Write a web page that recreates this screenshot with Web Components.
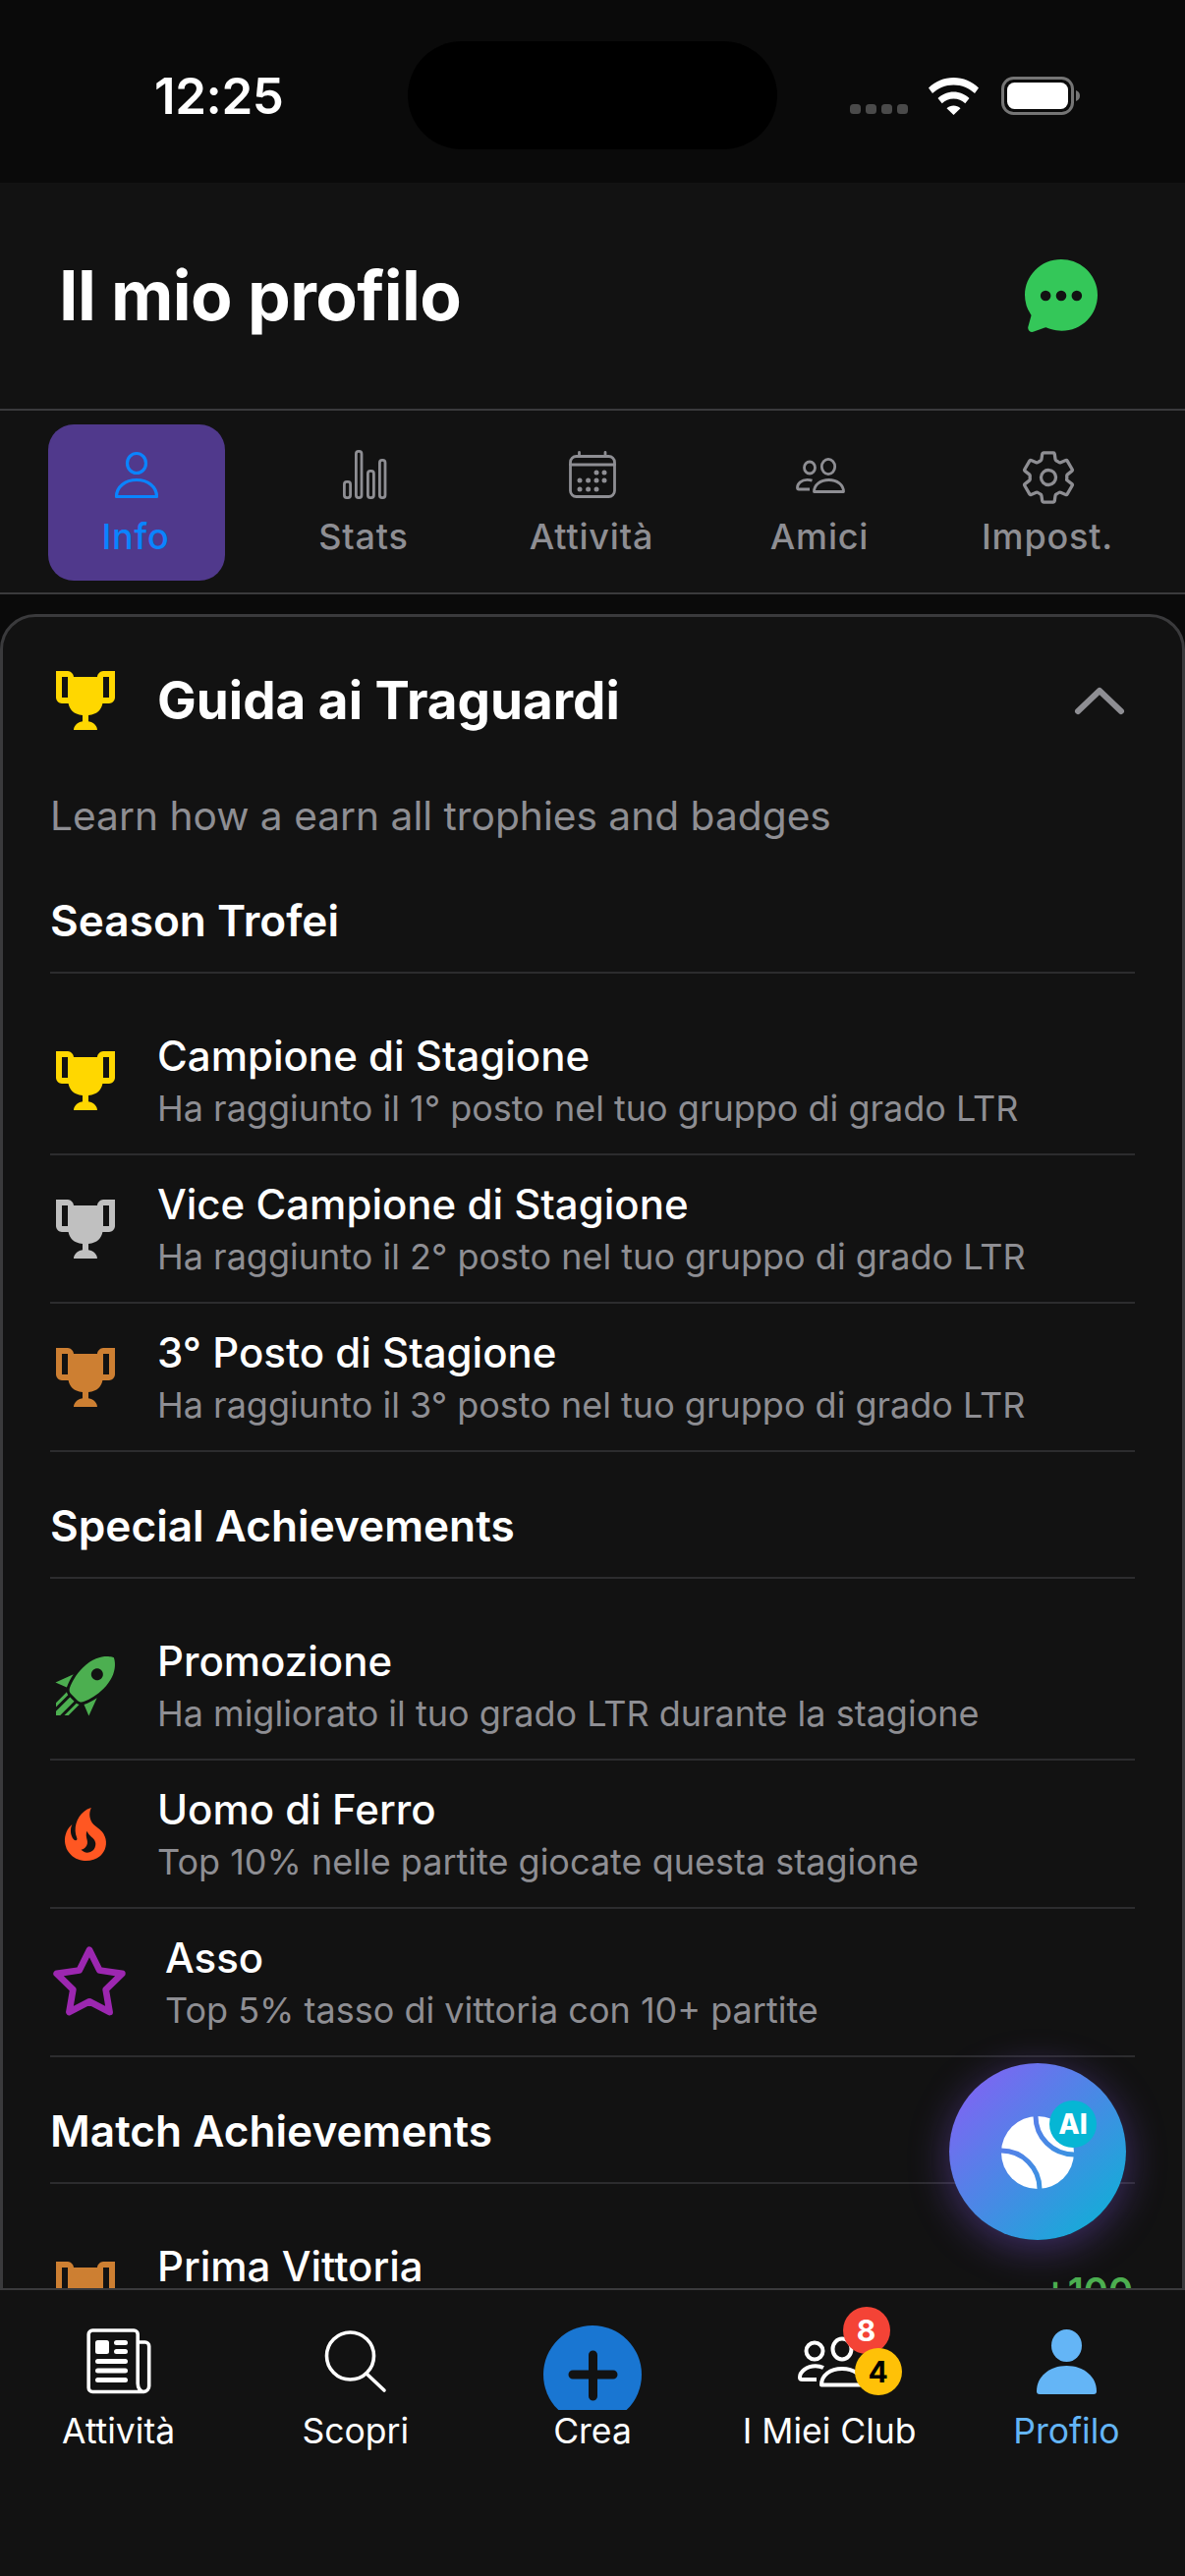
<!DOCTYPE html>
<html lang="it">
<head>
<meta charset="utf-8">
<title>Il mio profilo</title>
<style>
  html, body { margin: 0; padding: 0; background: #0a0a0a; }
  body { font-family: Inter, "Liberation Sans", sans-serif; }
</style>
</head>
<body>
<profile-app>
  <status-bar slot="status"></status-bar>
  <page-header slot="header">Il mio profilo</page-header>
  <tab-strip slot="tabs">
    <tab-item icon="user" active>Info</tab-item>
    <tab-item icon="bars">Stats</tab-item>
    <tab-item icon="calendar">Attività</tab-item>
    <tab-item icon="people">Amici</tab-item>
    <tab-item icon="gear">Impost.</tab-item>
  </tab-strip>
  <guide-card heading="Guida ai Traguardi" note="Learn how a earn all trophies and badges">
    <guide-section heading="Season Trofei">
      <guide-row icon="trophy" color="#ffd700" title="Campione di Stagione" text="Ha raggiunto il 1° posto nel tuo gruppo di grado LTR"></guide-row>
      <guide-row icon="trophy" color="#c0c0c0" title="Vice Campione di Stagione" text="Ha raggiunto il 2° posto nel tuo gruppo di grado LTR"></guide-row>
      <guide-row icon="trophy" color="#cd7f32" title="3° Posto di Stagione" text="Ha raggiunto il 3° posto nel tuo gruppo di grado LTR"></guide-row>
    </guide-section>
    <guide-section heading="Special Achievements">
      <guide-row icon="rocket" color="#4caf50" title="Promozione" text="Ha migliorato il tuo grado LTR durante la stagione"></guide-row>
      <guide-row icon="fire" color="#ff5722" title="Uomo di Ferro" text="Top 10% nelle partite giocate questa stagione"></guide-row>
      <guide-row icon="star" color="#9c27b0" title="Asso" text="Top 5% tasso di vittoria con 10+ partite" wide></guide-row>
    </guide-section>
    <guide-section heading="Match Achievements">
      <guide-row icon="trophy" color="#cd7f32" title="Prima Vittoria" text="Ha vinto la tua prima partita" points="+100"></guide-row>
    </guide-section>
  </guide-card>
  <ai-fab slot="fab"></ai-fab>
  <bottom-nav slot="nav">
    <nav-item icon="news">Attività</nav-item>
    <nav-item icon="search">Scopri</nav-item>
    <nav-item icon="create">Crea</nav-item>
    <nav-item icon="club" red="8" amber="4">I Miei Club</nav-item>
    <nav-item icon="person" active>Profilo</nav-item>
  </bottom-nav>
</profile-app>

<script>
// shared svg bodies, all drawn in currentColor
const ICONS = {
  user: `<svg viewBox="0 0 60 60" fill="none" stroke="currentColor" stroke-width="3.2" stroke-linejoin="round"><ellipse cx="30" cy="15.500" rx="9.500" ry="10"/><path d="M9.500 49.500c0-10 9-17 20.500-17s20.500 7 20.500 17z"/></svg>`,
  bars: `<svg viewBox="0 0 60 60" fill="none" stroke="currentColor" stroke-width="2.800"><rect x="9.400" y="34.400" width="6.200" height="16.200" rx="2.500"/><rect x="21.400" y="3.400" width="5.600" height="47.200" rx="2.500"/><rect x="33.400" y="23.400" width="6" height="27.200" rx="2.500"/><rect x="45.400" y="12.400" width="5.600" height="38.200" rx="2.500"/></svg>`,
  calendar: `<svg viewBox="0 0 60 60" fill="none" stroke="currentColor" stroke-width="2.800" stroke-linecap="round"><rect x="7.500" y="8.500" width="45" height="41" rx="6"/><path d="M7.500 17h45M16.500 4.500v4M43 4.500v4"/><g fill="currentColor" stroke="none"><circle cx="34" cy="25" r="2.500"/><circle cx="42" cy="25" r="2.500"/><circle cx="17" cy="33" r="2.500"/><circle cx="25.600" cy="33" r="2.500"/><circle cx="34" cy="33" r="2.500"/><circle cx="42" cy="33" r="2.500"/><circle cx="17" cy="42" r="2.500"/><circle cx="25.600" cy="42" r="2.500"/><circle cx="34" cy="42" r="2.500"/></g></svg>`,
  people: `<svg viewBox="0 0 60 60" fill="none" stroke="currentColor" stroke-width="2.800" stroke-linejoin="round"><ellipse cx="19" cy="20" rx="5.500" ry="6"/><ellipse cx="38" cy="19" rx="6.700" ry="7.700"/><path d="M23.500 44.500c0-7 6.500-12 15-12s15 5 15 12z"/><path d="M21.500 33.200c-1.500-.5-3-.8-5-.8-6 0-10 4-10 8 0 1 .5 1.600 1.500 1.600h11"/></svg>`,
  gear: `<svg viewBox="0 0 512 512" fill="none" stroke="currentColor" stroke-width="28" stroke-linecap="round" stroke-linejoin="round"><path d="M262.290 192.310a64 64 0 1057.400 57.400 64.130 64.130 0 00-57.400-57.400zM416.390 256a154.340 154.340 0 01-1.530 20.790l45.210 35.460a10.810 10.810 0 012.450 13.750l-42.770 74a10.810 10.810 0 01-13.140 4.590l-44.900-18.080a16.110 16.110 0 00-15.170 1.750A164.480 164.480 0 01325 400.800a15.940 15.940 0 00-8.820 12.140l-6.730 47.890a11.080 11.080 0 01-10.680 9.170h-85.540a11.110 11.110 0 01-10.690-8.870l-6.720-47.820a16.070 16.070 0 00-9-12.220 155.300 155.300 0 01-21.460-12.570 16 16 0 00-15.110-1.710l-44.890 18.070a10.810 10.810 0 01-13.140-4.580l-42.770-74a10.800 10.800 0 012.450-13.750l38.210-30a16.050 16.050 0 006-14.080c-.36-4.170-.58-8.330-.58-12.500s.21-8.270.58-12.350a16 16 0 00-6.070-13.940l-38.190-30A10.810 10.810 0 0149.480 186l42.770-74a10.810 10.810 0 0113.140-4.590l44.900 18.080a16.110 16.110 0 0015.170-1.750A164.480 164.480 0 01187 111.200a15.940 15.940 0 008.820-12.140l6.730-47.890A11.080 11.080 0 01213.230 42h85.540a11.110 11.110 0 0110.690 8.870l6.720 47.820a16.070 16.070 0 009 12.220 155.300 155.300 0 0121.460 12.570 16 16 0 0015.110 1.710l44.890-18.070a10.810 10.810 0 0113.140 4.580l42.770 74a10.800 10.800 0 01-2.450 13.750l-38.210 30a16.050 16.050 0 00-6.050 14.080c.33 4.140.55 8.300.55 12.470z"/></svg>`,
  trophy: `<svg viewBox="0 0 24 24" fill="currentColor"><path d="M18 2C17.100 2 16 3 16 4H8C8 3 6.900 2 6 2H2V11C2 12 3 13 4 13H6.200C6.600 15 7.900 16.700 11 17V19.080C8 19.540 8 22 8 22H16C16 22 16 19.540 13 19.080V17C16.100 16.700 17.400 15 17.800 13H20C21 13 22 12 22 11V2H18M6 11H4V4H6V11M20 11H18V4H20V11Z"/></svg>`,
  rocket: `<svg viewBox="0 0 24 24" fill="currentColor"><path d="M13.130 22.190L11.500 18.360C13.070 17.780 14.540 17 15.900 16.090L13.130 22.190M5.640 12.500L1.810 10.870L7.910 8.100C7 9.460 6.220 10.930 5.640 12.500M21.610 2.390C21.610 2.390 16.660 .269 11 5.930C8.810 8.120 7.500 10.530 6.650 12.640C6.370 13.390 6.560 14.210 7.110 14.770L9.240 16.890C9.790 17.450 10.610 17.640 11.360 17.360C13.500 16.540 15.880 15.190 18.070 13C23.730 7.340 21.610 2.390 21.610 2.390M14.540 9.460C13.760 8.680 13.760 7.410 14.540 6.630S16.590 5.850 17.370 6.630C18.140 7.410 18.150 8.680 17.370 9.460C16.590 10.240 15.320 10.240 14.540 9.460M6.240 22L9.880 18.360C9.540 18.270 9.210 18.120 8.910 17.910L4.830 22H6.240M2 22H3.410L8.180 17.240L6.760 15.830L2 20.590V22M2 19.170L6.090 15.090C5.880 14.790 5.730 14.470 5.640 14.120L2 17.760V19.170Z"/></svg>`,
  fire: `<svg viewBox="0 0 24 24" fill="currentColor"><path d="M17.660 11.200C17.430 10.900 17.150 10.640 16.890 10.380C16.220 9.780 15.460 9.350 14.820 8.720C13.330 7.260 13 4.850 13.950 3C13 3.230 12.170 3.750 11.460 4.320C8.870 6.400 7.850 10.070 9.070 13.220C9.110 13.320 9.150 13.420 9.150 13.550C9.150 13.770 9 13.970 8.800 14.050C8.570 14.150 8.330 14.090 8.140 13.930C8.080 13.880 8.040 13.830 8 13.760C6.870 12.330 6.690 10.280 7.450 8.640C5.780 10 4.870 12.300 5 14.470C5.060 14.970 5.120 15.470 5.290 15.970C5.430 16.570 5.700 17.170 6 17.700C7.080 19.430 8.950 20.670 10.960 20.920C13.100 21.190 15.390 20.800 17.030 19.320C18.860 17.660 19.500 15 18.560 12.720L18.430 12.460C18.220 12 17.660 11.200 17.660 11.200M14.500 17.500C14.220 17.740 13.760 18 13.400 18.100C12.280 18.500 11.160 17.940 10.500 17.280C11.690 17 12.400 16.120 12.610 15.230C12.780 14.430 12.460 13.770 12.330 13C12.210 12.260 12.230 11.630 12.500 10.940C12.690 11.320 12.890 11.700 13.130 12C13.900 13 15.110 13.440 15.370 14.800C15.410 14.940 15.430 15.080 15.430 15.230C15.460 16.050 15.100 16.950 14.500 17.500H14.500Z"/></svg>`,
  star: `<svg viewBox="0 0 24 24" fill="none" stroke="currentColor" stroke-width="2" stroke-linejoin="round"><polygon points="12 2 15.090 8.260 22 9.270 17 14.140 18.180 21.020 12 17.770 5.820 21.020 7 14.140 2 9.270 8.910 8.260"/></svg>`,
  news: `<svg viewBox="0 0 72 72" fill="none" stroke="currentColor" stroke-width="3.600" stroke-linejoin="round"><path d="M5.200 7a4 4 0 014-4h42a4 4 0 014 4v50c0 5 3 8.500 6 8.500H9.200a4 4 0 01-4-4z"/><path d="M55.200 15h7.500a4 4 0 014 4v40.500a6 6 0 01-5.500 6"/><g fill="currentColor" stroke="none"><rect x="12" y="13" width="14" height="14" rx="2.500"/><rect x="31" y="13" width="14" height="5" rx="2.500"/><rect x="31" y="22" width="14" height="5" rx="2.500"/><rect x="12" y="32" width="33" height="5" rx="2.500"/><rect x="12" y="41.500" width="33" height="5" rx="2.500"/><rect x="12" y="51" width="33" height="5" rx="2.500"/></g></svg>`,
  search: `<svg viewBox="0 0 72 72" fill="none" stroke="currentColor" stroke-width="3.600" stroke-linecap="round"><circle cx="30.500" cy="29" r="24"/><path d="M47 47l18 17"/></svg>`,
  person: `<svg viewBox="0 0 72 72" fill="currentColor"><ellipse cx="36.500" cy="18.500" rx="15.500" ry="16.500"/><path d="M6 65c0-15 13-26 30.500-26S67 50 67 65a3 3 0 01-3 3H9a3 3 0 01-3-3z"/></svg>`,
  club: `<svg viewBox="0 0 96 72" fill="none" stroke="currentColor" stroke-width="4" stroke-linejoin="round"><ellipse cx="18" cy="24" rx="8.500" ry="8.500"/><ellipse cx="46" cy="22" rx="9.500" ry="10.500"/><path d="M25 58.500c0-10 9-16.500 21-16.500s21 6.500 21 16.500z"/><path d="M27 41c-2-1-5-1.800-8-1.800-9 0-16 6-16 11.500 0 1.500 1 2.300 2.500 2.300H20"/></svg>`
};

// tiny helper so each element stays a few lines
function shadow(el, html) {
  const root = el.attachShadow({mode: 'open'});
  root.innerHTML = html;
  return root;
}

class ProfileApp extends HTMLElement {
  constructor() {
    super();
    shadow(this, `
      <style>
        :host { display: flex; flex-direction: column; position: relative; width: 1206px; height: 2622px; overflow: hidden; background: #0a0a0a; color: #fff; font-family: Inter, "Liberation Sans", sans-serif; }
        main { flex: 1; min-height: 0; overflow: hidden; padding-top: 20px; }
      </style>
      <slot name="status"></slot>
      <slot name="header"></slot>
      <slot name="tabs"></slot>
      <main><slot></slot></main>
      <slot name="nav"></slot>
      <slot name="fab"></slot>
    `);
  }
}

class StatusBar extends HTMLElement {
  constructor() {
    super();
    shadow(this, `
      <style>
        :host { display: flex; align-items: center; height: 186px; background: #0a0a0a; position: relative; flex: none; }
        .time { position: absolute; left: 157px; top: 68px; font-size: 51px; line-height: 60px; font-weight: 600; color: #fff; letter-spacing: -0.4px; }
        .island { position: absolute; left: 415px; top: 42px; width: 376px; height: 110px; border-radius: 55px; background: #000; }
        .icons { position: absolute; left: 862px; top: 76px; }
        svg { display: block; }
      </style>
      <span class="time">12:25</span>
      <div class="island"></div>
      <div class="icons">
        <svg width="242" height="44" viewBox="0 0 242 44">
          <g fill="#4a4a4a"><rect x="3" y="30" width="11" height="10" rx="3.500"/><rect x="19" y="30" width="11" height="10" rx="3.500"/><rect x="35" y="30" width="11" height="10" rx="3.500"/><rect x="51" y="30" width="11" height="10" rx="3.500"/></g>
          <g fill="#fff"><path d="M83 13.500C90 6.800 98.500 3 108.500 3S127 6.800 134 13.500l-4 5.500C124.300 13.500 117 10.400 108.500 10.400S92.700 13.500 87 19z"/><path d="M92.500 24c4.300-4.200 10-6.600 16-6.600s11.700 2.400 16 6.600l-4.200 5.200c-3.100-3-7.300-4.800-11.800-4.800s-8.700 1.800-11.800 4.800z"/><path d="M101.500 34.300c2-1.700 4.400-2.700 7-2.700s5 1 7 2.700L108.500 41z"/></g>
          <rect x="158.500" y="3.500" width="71" height="36" rx="11" fill="none" stroke="#757575" stroke-width="3"/>
          <rect x="163" y="8" width="62" height="27" rx="7.500" fill="#fff"/>
          <path d="M233 16c3 1 4 3 4 5.500s-1 4.500-4 5.500z" fill="#757575"/>
        </svg>
      </div>
    `);
  }
}

class PageHeader extends HTMLElement {
  constructor() {
    super();
    shadow(this, `
      <style>
        :host { display: flex; flex: none; align-items: center; justify-content: space-between; box-sizing: border-box; height: 232px; padding: 0 89px 0 60px; background: #121212; border-bottom: 2px solid #3a3a3c; }
        h1 { margin: 0; font-size: 69.500px; line-height: 80px; font-weight: 700; color: #fff; letter-spacing: -0.6px; }
        svg { display: block; width: 74px; height: 74px; }
      </style>
      <h1><slot></slot></h1>
      <svg viewBox="32 32 448 448" fill="#34c759"><path fill-rule="evenodd" d="M398 81.840A227.400 227.400 0 00255.820 32C194.900 32 138 55.470 95.460 98.090 54.350 139.330 31.820 193.780 32 251.370a215.660 215.660 0 0035.650 118.760l.19.27c.28.41.57.82.86 1.220s.65.92.73 1.050l.22.40c1.130 2 2 4.440 1.230 6.900l-18.420 66.660a29.130 29.130 0 00-1.200 7.630A25.690 25.690 0 0076.830 480a29.440 29.440 0 0010.450-2.290l67.490-24.360.85-.33a14.750 14.750 0 015.800-1.150 15.120 15.120 0 015.370 1c1.620.63 16.330 6.260 31.850 10.600 12.900 3.600 39.740 9 60.770 9 59.650 0 115.350-23.100 156.830-65.060C457.360 365.770 480 310.420 480 251.490a213.500 213.500 0 00-4.780-45c-10.340-48.620-37.760-92.900-77.220-124.650zM160 288a32 32 0 1132-32 32 32 0 01-32 32zm96 0a32 32 0 1132-32 32 32 0 01-32 32zm96 0a32 32 0 1132-32 32 32 0 01-32 32z"/></svg>
    `);
  }
}

class TabStrip extends HTMLElement {
  constructor() {
    super();
    shadow(this, `
      <style>
        :host { display: flex; flex: none; box-sizing: border-box; height: 187px; padding: 14px 23px 12px; background: #121212; border-bottom: 2px solid #3a3a3c; }
      </style>
      <slot></slot>
    `);
  }
}

class TabItem extends HTMLElement {
  constructor() {
    super();
    const active = this.hasAttribute('active');
    shadow(this, `
      <style>
        :host { display: block; flex: 1; padding: 0 26px; }
        div { display: flex; flex-direction: column; align-items: center; box-sizing: border-box; height: 159px; padding-top: 24px; border-radius: 26px; white-space: nowrap; font-size: 36px; line-height: 40px; font-weight: 500; letter-spacing: 0.8px; color: ${active ? '#0a84ff' : '#8e8e93'}; background: ${active ? '#50398c' : 'transparent'}; }
        svg { display: block; width: 60px; height: 60px; margin-bottom: 10px; }
        span { margin-left: -2px; }
      </style>
      <div>${ICONS[this.getAttribute('icon')]}<span><slot></slot></span></div>
    `);
  }
}

class GuideCard extends HTMLElement {
  constructor() {
    super();
    shadow(this, `
      <style>
        :host { display: block; box-sizing: border-box; min-height: 1800px; padding: 0 48px; background: #121212; border: 3px solid #3a3a3c; border-radius: 36px 36px 0 0; }
        header { display: flex; align-items: center; height: 170px; }
        svg { display: block; flex: none; }
        .cup { width: 72px; height: 72px; color: #ffd700; margin-right: 37px; }
        h2 { flex: 1; margin: 0; font-size: 53px; line-height: 64px; font-weight: 700; color: #fff; }
        .chev { width: 52px; height: 30px; margin-right: 10px; }
        p { margin: 0; font-size: 40.700px; line-height: 48px; color: #8e8e93; height: 111px; padding-top: 9px; box-sizing: border-box; }
      </style>
      <header>
        <span class="cup">${ICONS.trophy}</span>
        <h2></h2>
        <svg class="chev" viewBox="0 0 52 30" fill="none" stroke="#8e8e93" stroke-width="6" stroke-linecap="round" stroke-linejoin="round"><path d="M4 26L26 5l22 21"/></svg>
      </header>
      <p></p>
      <slot></slot>
    `);
    this.shadowRoot.querySelector('h2').textContent = this.getAttribute('heading');
    this.shadowRoot.querySelector('p').textContent = this.getAttribute('note');
  }
}

class GuideSection extends HTMLElement {
  constructor() {
    super();
    shadow(this, `
      <style>
        :host { display: block; padding-bottom: 47px; }
        h3 { box-sizing: border-box; margin: 0 0 34px; height: 82px; padding-bottom: 12px; border-bottom: 2px solid #2c2c2e; font-size: 44.200px; line-height: 56px; font-weight: 600; color: #fff; }
      </style>
      <h3></h3>
      <slot></slot>
    `);
    this.shadowRoot.querySelector('h3').textContent = this.getAttribute('heading');
  }
}

class GuideRow extends HTMLElement {
  constructor() {
    super();
    const wide = this.hasAttribute('wide');
    const points = this.getAttribute('points');
    shadow(this, `
      <style>
        :host { display: flex; align-items: center; box-sizing: border-box; height: 151px; border-bottom: 2px solid #2c2c2e; }
        .icon { flex: none; width: ${wide ? 80 : 72}px; height: ${wide ? 80 : 72}px; margin-right: 37px; color: ${this.getAttribute('color')}; }
        .icon svg { display: block; }
        .body { flex: 1; min-width: 0; }
        .title { font-size: 42px; line-height: 52px; font-weight: 500; color: #fff; }
        .text { margin-top: 5px; font-size: 36px; line-height: 44px; color: #8e8e93; white-space: nowrap; }
        .points { font-size: 38px; line-height: 48px; font-weight: 600; color: #4caf50; padding-right: 2px; }
      </style>
      <span class="icon">${ICONS[this.getAttribute('icon')]}</span>
      <div class="body">
        <div class="title"></div>
        <div class="text"></div>
      </div>
      ${points ? '<span class="points"></span>' : ''}
    `);
    this.shadowRoot.querySelector('.title').textContent = this.getAttribute('title');
    this.shadowRoot.querySelector('.text').textContent = this.getAttribute('text');
    if (points) this.shadowRoot.querySelector('.points').textContent = points;
  }
}

class BottomNav extends HTMLElement {
  constructor() {
    super();
    shadow(this, `
      <style>
        :host { display: flex; flex: none; box-sizing: border-box; height: 293px; background: #121212; border-top: 2px solid #3a3a3c; position: relative; z-index: 1; }
      </style>
      <slot></slot>
    `);
  }
}

class NavItem extends HTMLElement {
  constructor() {
    super();
    const name = this.getAttribute('icon');
    const red = this.getAttribute('red');
    const amber = this.getAttribute('amber');
    const glyph = name === 'create'
      ? `<span class="create"><svg viewBox="0 0 100 100" fill="none" stroke="#121212" stroke-width="9" stroke-linecap="round"><path d="M50.500 30v42M30 50h41"/></svg></span>`
      : `<span class="glyph ${name}">${ICONS[name]}</span>`;
    shadow(this, `
      <style>
        :host { display: block; flex: 1; min-width: 0; }
        .item { display: flex; flex-direction: column; align-items: center; color: ${this.hasAttribute('active') ? '#64b5f6' : '#fff'}; }
        .top { position: relative; height: 122px; width: 100%; overflow: hidden; display: flex; justify-content: center; }
        .glyph { display: block; margin-top: 38px; width: 72px; height: 72px; }
        .club { width: 96px; margin-left: 29px; }
        svg { display: block; }
        .create { display: block; width: 100px; height: 100px; margin-top: 36px; border-radius: 50%; background: #1976d2; }
        .badge { position: absolute; width: 48px; height: 48px; border-radius: 50%; font-size: 30px; line-height: 48px; font-weight: 700; text-align: center; }
        .red { left: 134px; top: 17px; background: #f44336; color: #fff; }
        .amber { left: 146px; top: 59px; background: #ffc107; color: #000; }
        .label { margin-top: 0; font-size: 35.500px; line-height: 44px; white-space: nowrap; }
      </style>
      <div class="item">
        <div class="top">
          ${glyph}
          ${red ? `<span class="badge red">${red}</span>` : ''}
          ${amber ? `<span class="badge amber">${amber}</span>` : ''}
        </div>
        <span class="label"><slot></slot></span>
      </div>
    `);
  }
}

class AiFab extends HTMLElement {
  constructor() {
    super();
    shadow(this, `
      <style>
        :host { display: flex; align-items: center; justify-content: center; position: absolute; left: 966px; top: 2100px; width: 180px; height: 180px; border-radius: 50%; background: linear-gradient(135deg, #8b5cf6 0%, #06b6d4 100%); box-shadow: 0 8px 40px rgba(139, 92, 246, .38); }
        svg { display: block; }
        .ai { position: absolute; left: 102px; top: 38px; width: 48px; height: 48px; border-radius: 50%; background: #06b6d4; color: #fff; font-size: 28px; line-height: 48px; font-weight: 800; text-align: center; }
      </style>
      <svg width="74" height="74" viewBox="0 0 74 74" style="margin-top:2px">
        <mask id="seams"><rect width="74" height="74" fill="#fff"/><g fill="none" stroke="#000" stroke-width="5"><circle cx="74" cy="0" r="39"/><circle cx="0" cy="74" r="39"/></g></mask>
        <circle cx="37" cy="37" r="37" fill="#fff" mask="url(#seams)"/>
      </svg>
      <span class="ai">AI</span>
    `);
  }
}

customElements.define('profile-app', ProfileApp);
customElements.define('status-bar', StatusBar);
customElements.define('page-header', PageHeader);
customElements.define('tab-strip', TabStrip);
customElements.define('tab-item', TabItem);
customElements.define('guide-card', GuideCard);
customElements.define('guide-section', GuideSection);
customElements.define('guide-row', GuideRow);
customElements.define('bottom-nav', BottomNav);
customElements.define('nav-item', NavItem);
customElements.define('ai-fab', AiFab);
</script>
</body>
</html>
